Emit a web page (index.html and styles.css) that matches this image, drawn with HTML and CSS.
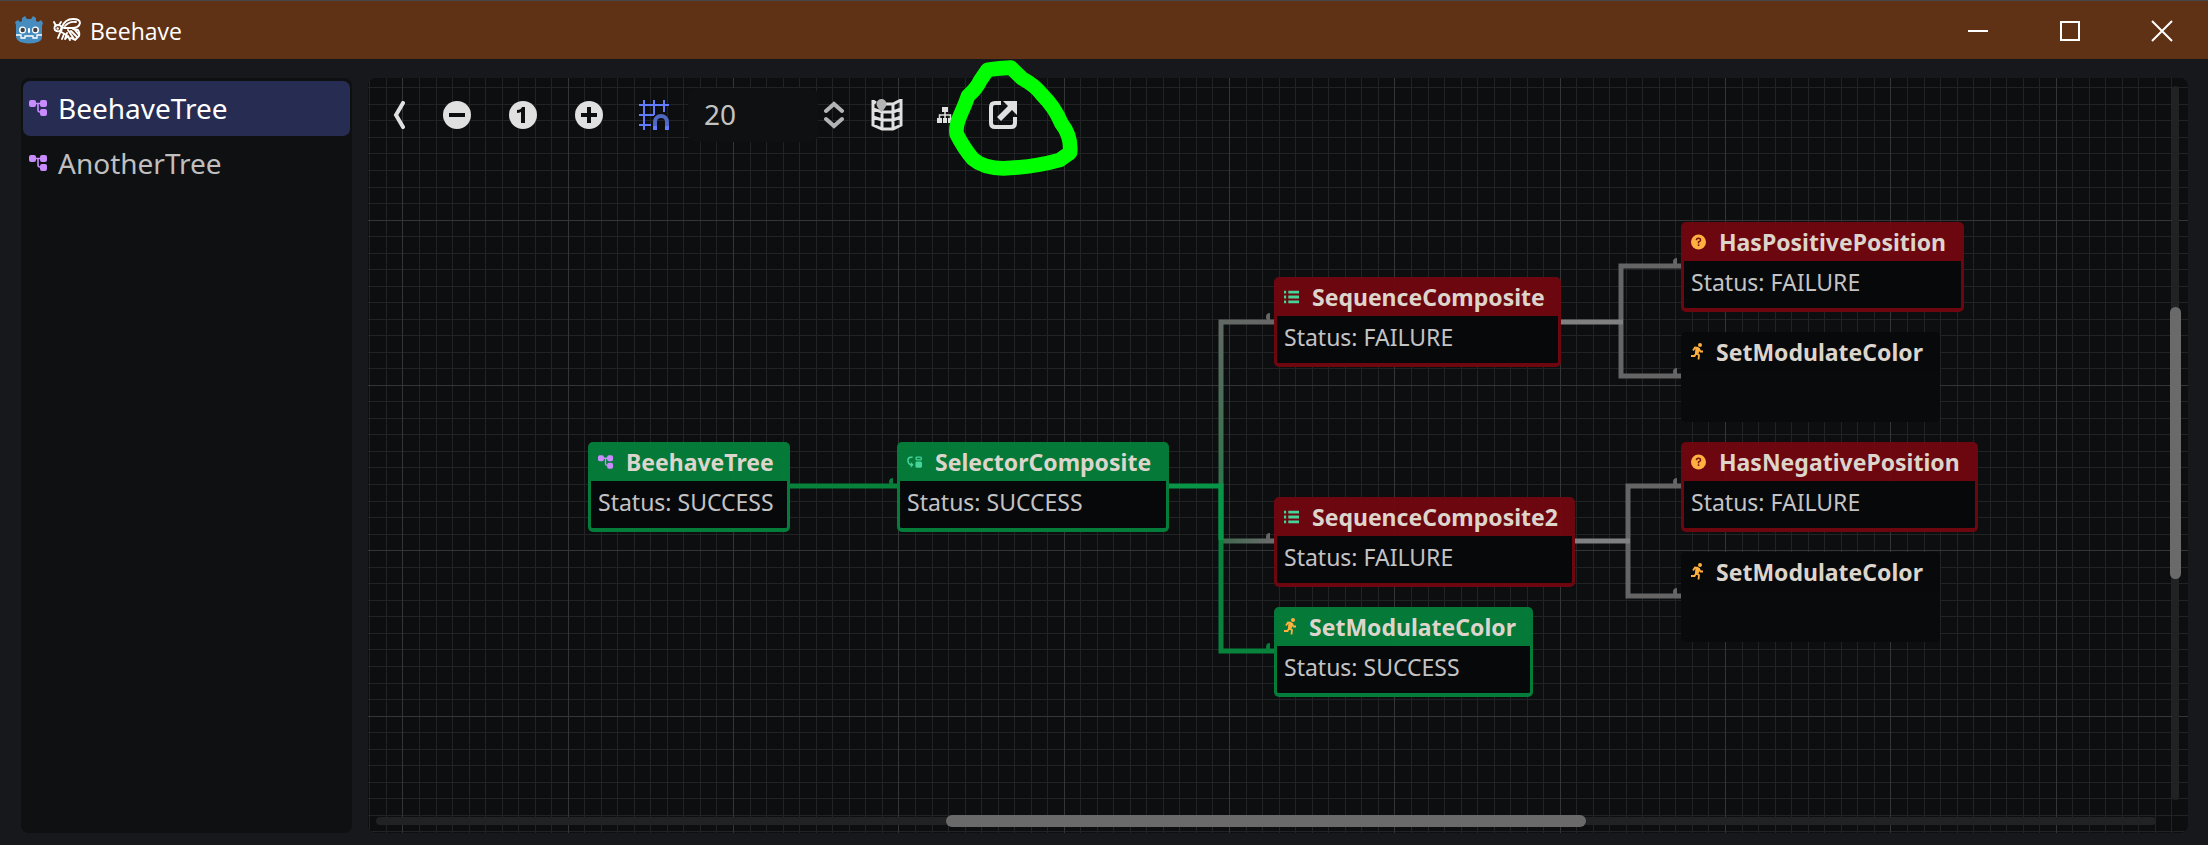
FILE: index.html
```html
<!DOCTYPE html>
<html lang="en">
<head>
<meta charset="utf-8">
<title>Beehave</title>
<link rel="stylesheet" href="styles.css">
</head>
<body>
<svg class="defs" aria-hidden="true">
  <symbol id="i-tree" viewBox="0 0 18 16">
    <rect x="0" y="0" width="7" height="7" rx="2"/><rect x="11" y="0" width="7" height="7" rx="2"/><rect x="11" y="9" width="7" height="7" rx="2"/>
    <path d="M5 3.500h8M9 3.500v6.500q0 2 2 2h2" fill="none" stroke="currentColor" stroke-width="1.600"/>
  </symbol>
  <symbol id="i-selector" viewBox="0 0 16 12">
    <path d="M6 1H4Q1 1 1 4.500T4 9h1" fill="none" stroke="currentColor" stroke-width="1.500"/><path d="M4 6l3 3-3 3z"/>
    <rect x="9.700" y=".7" width="5.600" height="3" rx="1" fill="none" stroke="currentColor" stroke-width="1.400"/><rect x="9" y="5.500" width="7" height="6.500" rx="1.500"/>
  </symbol>
  <symbol id="i-list" viewBox="0 0 14 12">
    <path d="M0 1.500h2M4 1.500h10M0 6h2M4 6h10M0 10.500h2M4 10.500h10" stroke="currentColor" stroke-width="2.600"/>
  </symbol>
  <symbol id="i-run" viewBox="0 0 12 17">
    <circle cx="9" cy="2" r="2"/>
    <path d="M7.500 5L5 10.500 8 12l-.5 4.500M5 10.500L3.500 13H0M7.500 5L4 4.500 2 7.500M8 6l1.500 2.500H12" fill="none" stroke="currentColor" stroke-width="1.800"/>
    <path d="M4.500 4.500L9 5 7.500 11 4 10z"/>
  </symbol>
  <symbol id="i-question" viewBox="0 0 16 16">
    <circle cx="8" cy="8" r="8"/>
    <path d="M5.800 6.200Q5.800 4 8 4t2.200 2Q10.200 7 8 8v1.500" fill="none" stroke="#7a1010" stroke-width="1.600"/><rect x="7.200" y="10.500" width="1.700" height="1.700" fill="#7a1010"/>
  </symbol>
</svg>

<header class="titlebar">
  <svg class="godot" viewBox="0 0 28 28" aria-hidden="true">
    <path fill="#478cbf" d="M7 2l3-2 2 3h4l2-3 3 2v3l2 1 3-2 2 3-1 3v11q0 6-13 6.500Q1 27 1 20V9L0 6l3-2 2 2 2-1z"/>
    <path d="M1 19h5v3h4v-2h8v2h4v-3h5" fill="none" stroke="#fff" stroke-width="1.300"/>
    <circle cx="7.500" cy="14" r="3.500" fill="#fff"/><circle cx="20.500" cy="14" r="3.500" fill="#fff"/>
    <circle cx="7.700" cy="14" r="2.200" fill="#414042"/><circle cx="20.300" cy="14" r="2.200" fill="#414042"/>
    <rect x="13" y="12" width="2" height="5" rx="1" fill="#fff"/>
  </svg>
  <svg class="bee" viewBox="0 0 28 24" aria-hidden="true">
    <g fill="none" stroke="#fff" stroke-width="1.900" stroke-linecap="round" stroke-linejoin="round">
      <path d="M1 4l2 4M8 4L6 7M2 8q3-2 6 0 1 3-1 5-3 1-5-1-1-2 0-4z"/>
      <path d="M9 9Q12 1 20 1q7 0 7 4-1 5-8 5h-8zM12 8q4-5 11-4"/>
      <path d="M20 11l5 1q2 3 1 6l-4 4-4-2M18 13l6 6M22 12l4 5M15 12l6 9M9 10l-1 4 4 2M11 16l-2 5M14 15l-2 6 3-3 2 4M7 15l-2 5"/>
    </g><circle cx="4.700" cy="10.500" r="1.200" fill="#fff"/>
  </svg>
  <h1 class="window-title">Beehave</h1>
  <div class="window-buttons">
    <button type="button" aria-label="Minimize"><svg viewBox="0 0 20 20"><path d="M0 10h20"/></svg></button>
    <button type="button" aria-label="Maximize"><svg viewBox="0 0 20 20"><path d="M1 1h18v18H1z"/></svg></button>
    <button type="button" aria-label="Close"><svg viewBox="0 0 20 20"><path d="M0 0l20 20M20 0L0 20"/></svg></button>
  </div>
</header>

<main class="workspace">
  <nav class="sidebar" aria-label="Trees">
    <button type="button" class="tree-item selected"><svg class="tree-icon"><use href="#i-tree"/></svg>BeehaveTree</button>
    <button type="button" class="tree-item"><svg class="tree-icon"><use href="#i-tree"/></svg>AnotherTree</button>
  </nav>

  <section class="graph" aria-label="Behavior tree graph">
    <svg class="layer" aria-hidden="true">
      <defs>
        <pattern id="grid" x="34" y="142" width="496" height="496" patternUnits="userSpaceOnUse">
          <path class="minor" d="M17 0v496M34 0v496M50 0v496M67 0v496M83 0v496M100 0v496M116 0v496M133 0v496M149 0v496M182 0v496M199 0v496M215 0v496M232 0v496M248 0v496M265 0v496M281 0v496M298 0v496M314 0v496M348 0v496M364 0v496M381 0v496M397 0v496M414 0v496M430 0v496M447 0v496M463 0v496M480 0v496" transform="translate(.5)"/>
          <path class="minor" d="M0 16h496M0 33h496M0 49h496M0 66h496M0 82h496M0 99h496M0 115h496M0 132h496M0 148h496M0 181h496M0 198h496M0 214h496M0 231h496M0 247h496M0 264h496M0 281h496M0 297h496M0 314h496M0 347h496M0 363h496M0 380h496M0 396h496M0 413h496M0 429h496M0 446h496M0 463h496M0 479h496" transform="translate(0 .5)"/>
          <path class="major" d="M0 0v496M166 0v496M331 0v496" transform="translate(.5)"/>
          <path class="major" d="M0 0h496M0 165h496M0 330h496" transform="translate(0 .5)"/>
        </pattern>
        <linearGradient id="fade-up" gradientUnits="userSpaceOnUse" x1="853" y1="408" x2="906" y2="244"><stop stop-color="#2f754a"/><stop offset="1" stop-color="#676767"/></linearGradient>
        <linearGradient id="fade-mid" gradientUnits="userSpaceOnUse" x1="853" y1="0" x2="906" y2="0"><stop stop-color="#3f684e"/><stop offset="1" stop-color="#6c6c6c"/></linearGradient>
      </defs>
      <rect width="100%" height="100%" fill="url(#grid)"/>
      <g class="wires">
        <path stroke="url(#fade-up)" d="M853 408V244h53"/>
        <path stroke="url(#fade-mid)" d="M853 463h53"/>
        <path class="ok" d="M422 408h107M853 408v165h53"/>
        <path class="ok bright" d="M801 408h52v54"/>
        <path class="idle" d="M1313 188h-60v110h60M1313 408h-53v110h53"/>
        <path class="idle bright" d="M1193 244h62M1207 463h55"/>
      </g>
    </svg>

    <article class="node success" style="left:220px;top:364px;width:202px"><h2><svg class="ic purple"><use href="#i-tree"/></svg>BeehaveTree</h2><p>Status: SUCCESS</p></article>
    <article class="node success in" style="left:529px;top:364px;width:272px"><h2><svg class="ic mint"><use href="#i-selector"/></svg>SelectorComposite</h2><p>Status: SUCCESS</p></article>
    <article class="node failure in" style="left:906px;top:199px;width:287px"><h2><svg class="ic mint"><use href="#i-list"/></svg>SequenceComposite</h2><p>Status: FAILURE</p></article>
    <article class="node failure in" style="left:906px;top:419px;width:301px"><h2><svg class="ic mint"><use href="#i-list"/></svg>SequenceComposite2</h2><p>Status: FAILURE</p></article>
    <article class="node success in" style="left:906px;top:529px;width:259px"><h2><svg class="ic narrow"><use href="#i-run"/></svg>SetModulateColor</h2><p>Status: SUCCESS</p></article>
    <article class="node failure in" style="left:1313px;top:144px;width:283px"><h2><svg class="ic"><use href="#i-question"/></svg>HasPositivePosition</h2><p>Status: FAILURE</p></article>
    <article class="node idle in" style="left:1313px;top:254px;width:259px"><h2><svg class="ic narrow"><use href="#i-run"/></svg>SetModulateColor</h2><p></p></article>
    <article class="node failure in" style="left:1313px;top:364px;width:297px"><h2><svg class="ic"><use href="#i-question"/></svg>HasNegativePosition</h2><p>Status: FAILURE</p></article>
    <article class="node idle in" style="left:1313px;top:474px;width:259px"><h2><svg class="ic narrow"><use href="#i-run"/></svg>SetModulateColor</h2><p></p></article>

    <div class="toolbar">
      <button type="button" class="slim" aria-label="Hide panel"><svg width="14" height="28" viewBox="0 0 14 28"><path d="M11 2L4 14l7 12" fill="none" stroke="currentColor" stroke-width="4" stroke-linecap="round"/></svg></button>
      <button type="button" aria-label="Zoom out"><svg width="28" height="28" viewBox="0 0 28 28"><circle cx="14" cy="14" r="14"/><path d="M6 14h16" stroke="#0d0e10" stroke-width="4"/></svg></button>
      <button type="button" aria-label="Reset zoom"><svg width="28" height="28" viewBox="0 0 28 28"><circle cx="14" cy="14" r="14"/><path d="M16 6v16h-4V11q-2 1-4 1V9q4 0 5-3z" fill="#0d0e10"/></svg></button>
      <button type="button" aria-label="Zoom in"><svg width="28" height="28" viewBox="0 0 28 28"><circle cx="14" cy="14" r="14"/><path d="M6 14h16M14 6v16" stroke="#0d0e10" stroke-width="4"/></svg></button>
      <button type="button" class="on" aria-label="Toggle snapping"><svg width="30" height="30" viewBox="0 0 30 30"><path d="M5 0v30M15 0v15M25 0v12M0 5h30M0 15h15M0 25h12" fill="none" stroke="currentColor" stroke-width="2"/><path d="M16 26v-4a6 6 0 0 1 12 0v4" fill="none" stroke="#5068c4" stroke-width="4"/><path d="M14 26h4v4h-4zM26 26h4v4h-4z"/></svg></button>
      <label class="spin"><input type="text" value="20" aria-label="Snap distance"><svg width="20" height="28" viewBox="0 0 20 28" aria-hidden="true"><path d="M2 10l8-7 8 7M2 18l8 7 8-7" fill="none" stroke="#b4b4b4" stroke-width="4" stroke-linecap="round"/></svg></label>
      <button type="button" class="mid" aria-label="Toggle minimap"><svg width="32" height="32" viewBox="0 0 32 32"><path d="M2 1v25l9 4h11l8-4V1l-8 4h-8M2 10l9 3h11l8-3M2 18l9 3h11l8-3M11 13v17M22 5v25M2 2l3 2" fill="none" stroke="currentColor" stroke-width="3"/><path d="M10.500 0a5 5 0 0 1 5 5q0 3-5 8-5-5-5-8a5 5 0 0 1 5-5z" fill="#b4b4b4"/></svg></button>
      <button type="button" class="wide" aria-label="Arrange nodes"><svg width="16" height="16" viewBox="0 0 16 16"><path d="M5 0h6v5H5zM0 11h5v5H0zM6 11h4v5H6zM11 11h5v5h-5z"/><path d="M8 5v6M2.500 11V8h11v3" fill="none" stroke="currentColor" stroke-width="1.500"/></svg></button>
      <button type="button" class="mid" aria-label="Make floating"><svg width="28" height="28" viewBox="0 0 28 28"><path d="M12 2H6Q2 2 2 6v16q0 4 4 4h16q4 0 4-4v-6" fill="none" stroke="currentColor" stroke-width="4"/><path d="M14 0h14v14l-5-5-11 11-4-4L19 5z"/></svg></button>
    </div>

    <div class="scroll vertical"><div class="thumb"></div></div>
    <div class="scroll horizontal"><div class="thumb"></div></div>
  </section>
</main>

<svg class="marker" viewBox="660 0 450 390" aria-hidden="true"><path d="M803 59Q840 55 873 53Q890 70 906 85Q945 106 967 135Q1005 173 1024 220Q1055 260 1050 308L1019 330Q940 352 850 355Q790 354 759 327Q730 293 710 252C705 215 727 190 744 138Q770 115 781 91Z"/></svg>
</body>
</html>
```
FILE: styles.css
```css
* { box-sizing: border-box; }

body {
  margin: 0;
  min-height: 100vh;
  display: flex;
  flex-direction: column;
  background: #17181c;
  color: #fff;
  font-family: "Noto Sans", "Open Sans", sans-serif;
  overflow: hidden;
}

button {
  border: 0;
  padding: 0;
  background: none;
  color: inherit;
  font: inherit;
}

.defs { position: absolute; width: 0; height: 0; }

.titlebar {
  display: flex;
  align-items: center;
  height: 59px;
  padding-left: 15px;
  background: #5f3115;
  border-top: 1px solid #47474b;
}
.godot { width: 28px; height: 28px; }
.bee { width: 28px; height: 24px; margin-left: 10px; }
.window-title {
  margin: 0;
  padding: 2px 0 0 9px;
  font-family: "Open Sans", sans-serif;
  font-size: 23px;
  font-weight: 400;
  line-height: 32px;
}
.window-buttons { display: flex; margin-left: auto; }
.window-buttons button { width: 92px; height: 58px; }
.window-buttons svg {
  width: 20px;
  height: 20px;
  overflow: visible;
  fill: none;
  stroke: #fff;
  stroke-width: 2;
  vertical-align: middle;
}

.workspace {
  flex: 1;
  display: flex;
  gap: 16px;
  padding: 19px 20px 12px 21px;
}

.sidebar {
  display: flex;
  flex-direction: column;
  width: 331px;
  padding: 3px 2px;
  border-radius: 8px;
  background: #0f1012;
}
.tree-item {
  display: flex;
  align-items: center;
  gap: 11px;
  height: 55px;
  padding: 0 0 2px 6px;
  border-radius: 7px;
  color: #bfbfc0;
  font-size: 28px;
  line-height: 38px;
}
.tree-item.selected { background: #262c52; color: #fff; }
.tree-icon { width: 18px; height: 16px; color: #c88cff; fill: currentColor; }

.graph {
  position: relative;
  flex: 1;
  min-width: 0;
  border-radius: 8px;
  overflow: hidden;
  background: #0d0e10;
}
.layer { position: absolute; inset: 0; width: 100%; height: 100%; }
.minor { stroke: #222325; }
.major { stroke: #343536; }
.wires { fill: none; stroke-width: 5; }
.wires .ok { stroke: #07833c; }
.wires .ok.bright { stroke: #099548; }
.wires .idle { stroke: #656565; }
.wires .idle.bright { stroke: #808080; }

.node {
  --frame: #047c3a;
  --head: rgba(4, 126, 58, .96);
  --port: #0b7a3c;
  position: absolute;
  height: 90px;
  border-radius: 5px;
}
.node.failure { --frame: #6e0610; --head: rgba(112, 6, 16, .96); --port: #666; }
.node.idle { --frame: #090a0c; --head: #08090b; --port: #666; }
.node h2 {
  display: flex;
  align-items: center;
  height: 39px;
  margin: 0;
  padding-left: 10px;
  border-radius: 5px 5px 0 0;
  background: var(--head);
  color: #ddd5cb;
  font-size: 23px;
  font-weight: 700;
  line-height: 38px;
  white-space: nowrap;
}
.node p {
  height: 51px;
  margin: 0;
  padding: 5px 7px;
  border: 3px solid var(--frame);
  border-top: 0;
  border-bottom-width: 4px;
  border-radius: 0 0 5px 5px;
  background: #07080a;
  color: #c3c3c4;
  font-size: 23px;
  line-height: 32px;
}
.node.idle p { background: #090a0c; }
.node.in::before {
  content: "";
  position: absolute;
  left: -8px;
  top: 36px;
  width: 4px;
  height: 8px;
  border-radius: 4px 0 0 4px;
  background: var(--port);
}
.ic { width: 15px; height: 16px; margin-right: 13px; color: #ffb03f; fill: currentColor; }
.ic.narrow { width: 12px; height: 17px; }
.ic.purple { color: #c88cff; }
.ic.mint { color: #47d49a; }

.toolbar {
  position: absolute;
  left: 8px;
  top: 10px;
  display: flex;
  align-items: center;
  gap: 4px;
  height: 54px;
  color: #e0e0e0;
}
.toolbar button { display: grid; place-items: center; width: 62px; height: 54px; }
.toolbar svg { fill: currentColor; }
.toolbar .slim { width: 46px; }
.toolbar .mid { width: 50px; }
.toolbar .wide { width: 58px; }
.toolbar .on { width: 60px; color: #627cff; }
.spin { display: flex; align-items: center; gap: 6px; width: 170px; }
.spin input {
  width: 130px;
  height: 54px;
  padding: 0 0 2px 16px;
  border: 0;
  border-radius: 8px;
  background: #0f1012;
  color: #c3c3c4;
  font: 28px/38px "Noto Sans", sans-serif;
}

.scroll { position: absolute; border-radius: 4px; background: #212224; }
.scroll .thumb { position: absolute; border-radius: 6px; background: #6a6a6b; }
.vertical { top: 8px; right: 9px; bottom: 33px; width: 7px; }
.vertical .thumb { top: 31%; height: 38%; left: -2px; right: -2px; }
.horizontal { left: 8px; right: 32px; bottom: 8px; height: 8px; }
.horizontal .thumb { left: 32%; width: 36%; top: -2px; bottom: -2px; }

.marker {
  position: absolute;
  left: 940px;
  top: 50px;
  width: 150px;
  height: 130px;
  fill: none;
  stroke: #0f0;
  stroke-width: 44;
  stroke-linejoin: round;
  pointer-events: none;
}
```
